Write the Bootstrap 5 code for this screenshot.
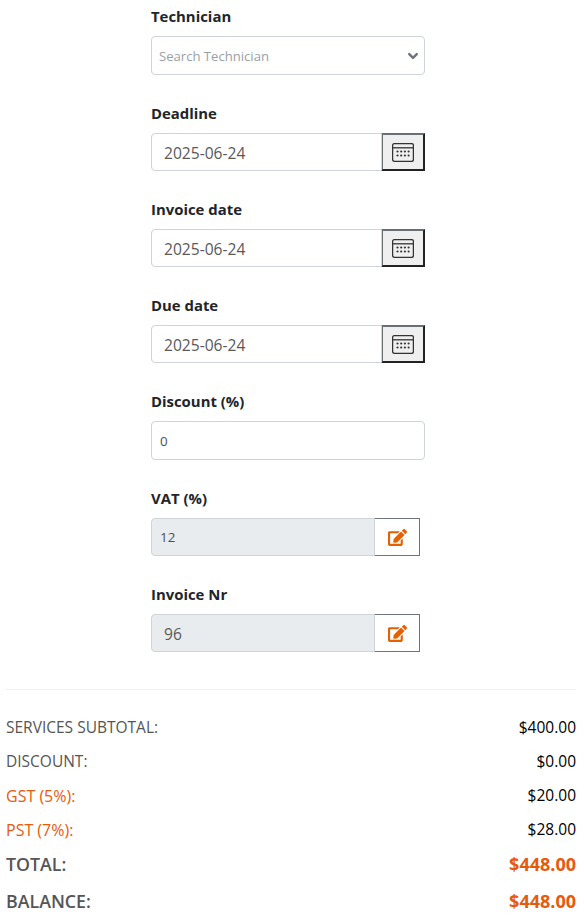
<!DOCTYPE html>
<html lang="en">
<head>
<meta charset="utf-8">
<title>Invoice form</title>
<link rel="stylesheet" href="https://cdn.jsdelivr.net/npm/bootstrap@5.3.0/dist/css/bootstrap.min.css">
<style>
body{font-family:"Open Sans","Noto Sans",sans-serif;font-size:15.5px;color:#212529;padding:4px 9px 0 6px;overflow:hidden}
.form-col{width:274px;margin-left:145px}
.fld{margin-bottom:26px}
.fld:last-child{margin-bottom:0}
.fld-label{display:block;font-weight:700;font-size:14.9px;line-height:24px;margin-bottom:8px;color:#212529}
.form-control,.form-select{border-radius:4px}
.fld-select{height:39px;font-size:13.1px;padding:2px 7px 0;color:#999fa6;border-color:#ced4da;background-position:right 3px center;background-size:16px 12px;background-image:url("data:image/svg+xml,%3csvg xmlns='http://www.w3.org/2000/svg' viewBox='0 0 16 16'%3e%3cpath fill='none' stroke='%236c757d' stroke-linecap='round' stroke-linejoin='round' stroke-width='3.2' d='M3 5.5l5 5 5-5'/%3e%3c/svg%3e")}
.fld-input{height:38px;font-size:15.6px;padding:2px 12px 0;color:#5a5a5a;border-color:#ced4da}
.fld-small{padding:0 8px;font-size:13.4px;color:#495057}
.fld-discount{height:39px}
.cal-btn{width:44px;height:38px;padding:0;display:flex;align-items:center;justify-content:center;background:#efefef;border-width:2px;border-style:solid;border-color:#6b7074 #222 #222 #6b7074;border-radius:0}
.lock-group{width:269px}
.lock-group .form-control{background:#e9ecef;border-color:#ced4da}
.edit-btn{width:46px;height:38px;padding:0;display:flex;align-items:center;justify-content:center;background:#fff;border:1px solid #6c757d;border-radius:0}
.rule{margin:37px 0 0;border-color:#c9c9c9}
.totals{margin-top:21px}
.t-row{height:34px;color:#555}
.t-val{color:#000}
.t-acc{color:#e65a0c;font-size:16px}
.t-big{font-size:17.8px;font-weight:600;color:#555}
.t-big .t-val{color:#e65a0c;font-weight:700;font-size:18px}
.t-row.t-big{height:37px;padding-bottom:2px}
</style>
</head>
<body>
<form class="form-col">
  <div class="fld">
    <label class="fld-label">Technician</label>
    <select class="form-select fld-select"><option>Search Technician</option></select>
  </div>
  <div class="fld">
    <label class="fld-label">Deadline</label>
    <div class="input-group">
      <input class="form-control fld-input" value="2025-06-24">
      <button type="button" class="cal-btn" aria-label="Calendar"><svg width="22" height="19" viewBox="0 0 22 19" fill="none"><rect x=".6" y=".6" width="20.800" height="17.800" rx="1.800" stroke="#333" stroke-width="1.300"/><path d="M1 4.800h20" stroke="#333" stroke-width="1.300"/><g fill="#333"><circle cx="5.500" cy="8.500" r="1.100"/><circle cx="9.200" cy="8.500" r="1.100"/><circle cx="12.900" cy="8.500" r="1.100"/><circle cx="16.600" cy="8.500" r="1.100"/><circle cx="5.500" cy="12.500" r="1.100"/><circle cx="9.200" cy="12.500" r="1.100"/><circle cx="12.900" cy="12.500" r="1.100"/><circle cx="16.600" cy="12.500" r="1.100"/></g></svg></button>
    </div>
  </div>
  <div class="fld">
    <label class="fld-label">Invoice date</label>
    <div class="input-group">
      <input class="form-control fld-input" value="2025-06-24">
      <button type="button" class="cal-btn" aria-label="Calendar"><svg width="22" height="19" viewBox="0 0 22 19" fill="none"><rect x=".6" y=".6" width="20.800" height="17.800" rx="1.800" stroke="#333" stroke-width="1.300"/><path d="M1 4.800h20" stroke="#333" stroke-width="1.300"/><g fill="#333"><circle cx="5.500" cy="8.500" r="1.100"/><circle cx="9.200" cy="8.500" r="1.100"/><circle cx="12.900" cy="8.500" r="1.100"/><circle cx="16.600" cy="8.500" r="1.100"/><circle cx="5.500" cy="12.500" r="1.100"/><circle cx="9.200" cy="12.500" r="1.100"/><circle cx="12.900" cy="12.500" r="1.100"/><circle cx="16.600" cy="12.500" r="1.100"/></g></svg></button>
    </div>
  </div>
  <div class="fld">
    <label class="fld-label">Due date</label>
    <div class="input-group">
      <input class="form-control fld-input" value="2025-06-24">
      <button type="button" class="cal-btn" aria-label="Calendar"><svg width="22" height="19" viewBox="0 0 22 19" fill="none"><rect x=".6" y=".6" width="20.800" height="17.800" rx="1.800" stroke="#333" stroke-width="1.300"/><path d="M1 4.800h20" stroke="#333" stroke-width="1.300"/><g fill="#333"><circle cx="5.500" cy="8.500" r="1.100"/><circle cx="9.200" cy="8.500" r="1.100"/><circle cx="12.900" cy="8.500" r="1.100"/><circle cx="16.600" cy="8.500" r="1.100"/><circle cx="5.500" cy="12.500" r="1.100"/><circle cx="9.200" cy="12.500" r="1.100"/><circle cx="12.900" cy="12.500" r="1.100"/><circle cx="16.600" cy="12.500" r="1.100"/></g></svg></button>
    </div>
  </div>
  <div class="fld">
    <label class="fld-label">Discount (%)</label>
    <input class="form-control fld-input fld-small fld-discount" value="0">
  </div>
  <div class="fld">
    <label class="fld-label">VAT (%)</label>
    <div class="input-group lock-group">
      <input class="form-control fld-input fld-small" value="12" readonly>
      <button type="button" class="edit-btn" aria-label="Edit"><svg width="19" height="17" viewBox="0 0 576 512"><path fill="#e65f00" d="M402.6 83.2l90.2 90.2c3.8 3.8 3.8 10 0 13.8L274.4 405.6l-92.8 10.3c-12.4 1.4-22.9-9.1-21.5-21.5l10.3-92.8L388.8 83.2c3.8-3.8 10-3.8 13.8 0zm162-22.9l-48.8-48.8c-15.2-15.2-39.9-15.2-55.2 0l-35.4 35.4c-3.8 3.8-3.8 10 0 13.8l90.2 90.2c3.8 3.8 10 3.8 13.8 0l35.4-35.4c15.2-15.3 15.2-40 0-55.2zM384 346.2V448H64V128h229.8c3.2 0 6.2-1.3 8.5-3.5l40-40c7.6-7.6 2.2-20.5-8.5-20.5H48C21.5 64 0 85.5 0 112v352c0 26.5 21.5 48 48 48h352c26.5 0 48-21.5 48-48V306.2c0-10.7-12.9-16-20.5-8.5l-40 40c-2.2 2.3-3.5 5.3-3.5 8.5z"/></svg></button>
    </div>
  </div>
  <div class="fld">
    <label class="fld-label">Invoice Nr</label>
    <div class="input-group lock-group">
      <input class="form-control fld-input" value="96" readonly>
      <button type="button" class="edit-btn" aria-label="Edit"><svg width="19" height="17" viewBox="0 0 576 512"><path fill="#e65f00" d="M402.6 83.2l90.2 90.2c3.8 3.8 3.8 10 0 13.8L274.4 405.6l-92.8 10.3c-12.4 1.4-22.9-9.1-21.5-21.5l10.3-92.8L388.8 83.2c3.8-3.8 10-3.8 13.8 0zm162-22.9l-48.8-48.8c-15.2-15.2-39.9-15.2-55.2 0l-35.4 35.4c-3.8 3.8-3.8 10 0 13.8l90.2 90.2c3.8 3.8 10 3.8 13.8 0l35.4-35.4c15.2-15.3 15.2-40 0-55.2zM384 346.2V448H64V128h229.8c3.2 0 6.2-1.3 8.5-3.5l40-40c7.6-7.6 2.2-20.5-8.5-20.5H48C21.5 64 0 85.5 0 112v352c0 26.5 21.5 48 48 48h352c26.5 0 48-21.5 48-48V306.2c0-10.7-12.9-16-20.5-8.5l-40 40c-2.2 2.3-3.5 5.3-3.5 8.5z"/></svg></button>
    </div>
  </div>
</form>
<hr class="rule">
<div class="totals">
  <div class="t-row d-flex justify-content-between align-items-center"><span>SERVICES SUBTOTAL:</span><span class="t-val">$400.00</span></div>
  <div class="t-row d-flex justify-content-between align-items-center"><span>DISCOUNT:</span><span class="t-val">$0.00</span></div>
  <div class="t-row d-flex justify-content-between align-items-center"><span class="t-acc">GST (5%):</span><span class="t-val">$20.00</span></div>
  <div class="t-row d-flex justify-content-between align-items-center"><span class="t-acc">PST (7%):</span><span class="t-val">$28.00</span></div>
  <div class="t-row t-big d-flex justify-content-between align-items-center"><span>TOTAL:</span><span class="t-val">$448.00</span></div>
  <div class="t-row t-big d-flex justify-content-between align-items-center"><span>BALANCE:</span><span class="t-val">$448.00</span></div>
</div>
</body>
</html>
